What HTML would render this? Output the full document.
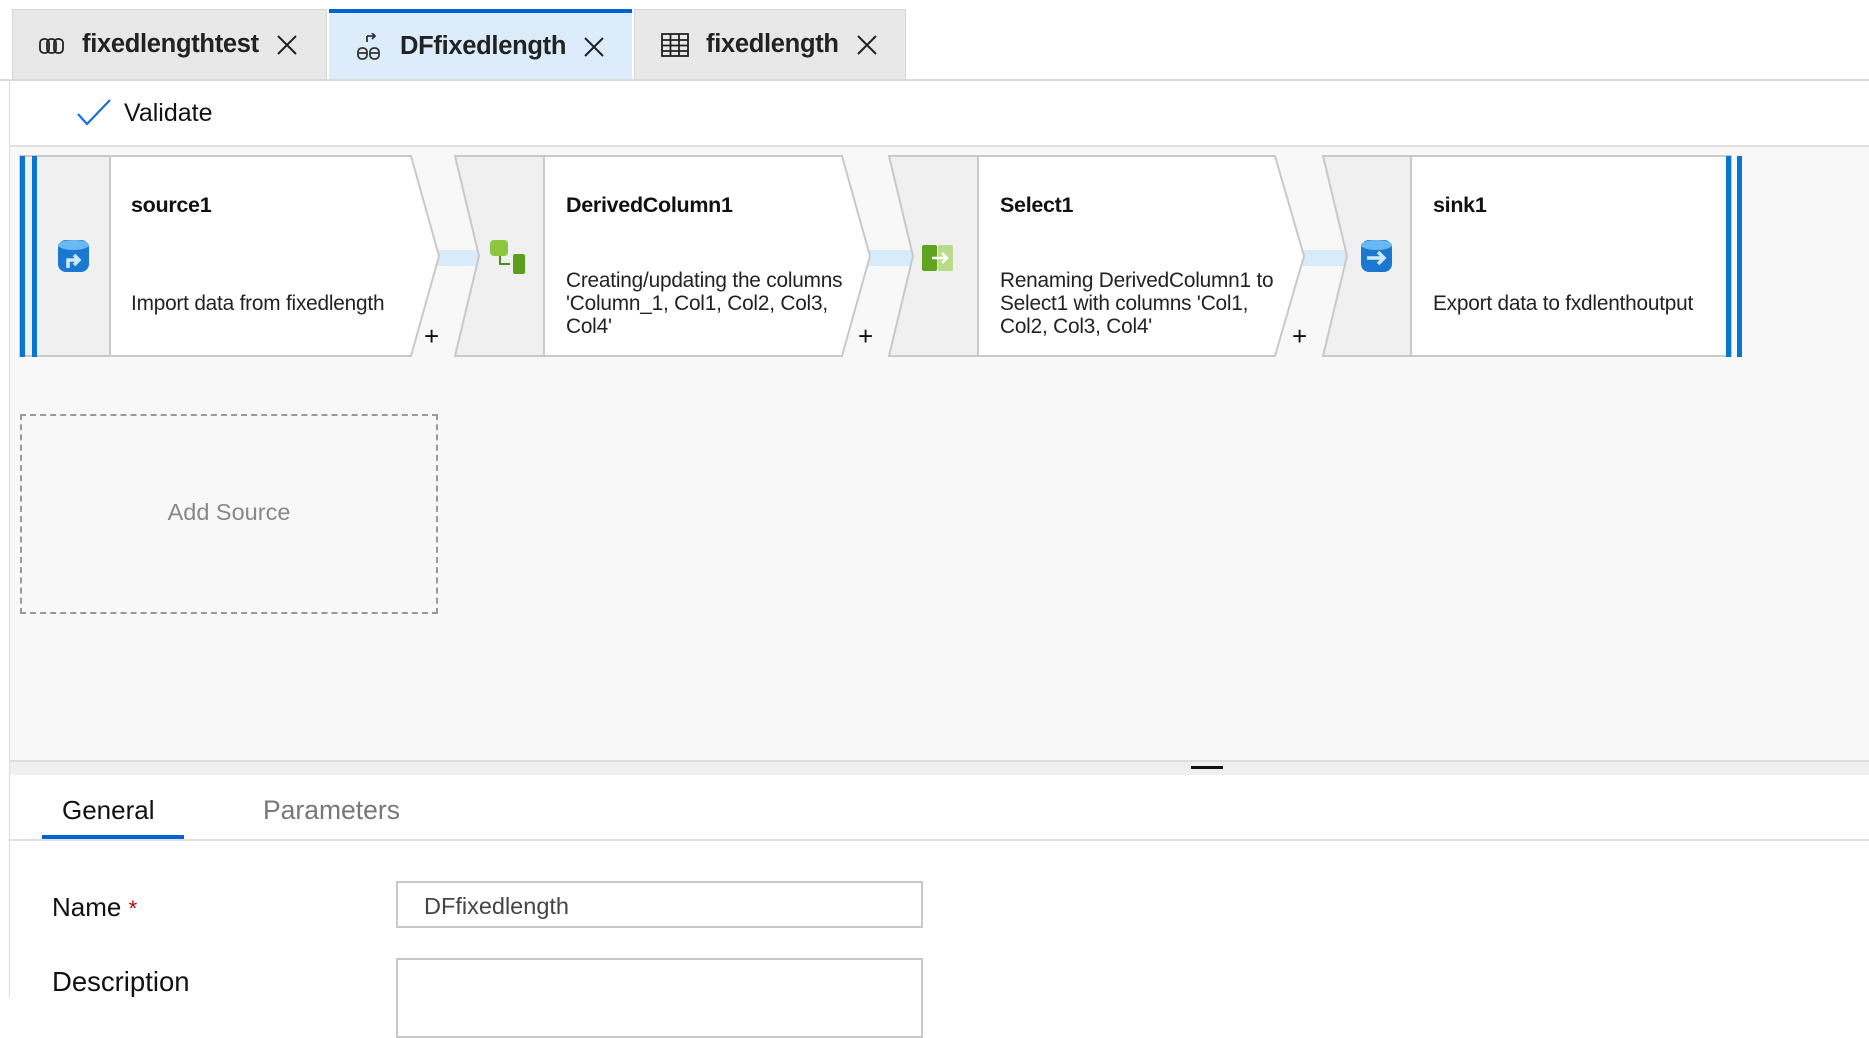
<!DOCTYPE html>
<html><head><meta charset="utf-8"><style>
*{margin:0;padding:0;box-sizing:border-box}
body{width:1869px;height:998px;overflow:hidden;background:#fff;font-family:"Liberation Sans",sans-serif;color:#111;position:relative}
.a{position:absolute;white-space:nowrap}
.tab{position:absolute;top:9px;height:70px;background:#e8e8e8;border:1px solid #d6d6d6;border-bottom:none}
.tt{position:absolute;top:30px;font-size:25.5px;font-weight:bold;color:#222;letter-spacing:-0.3px}
.ttl{font-size:21.5px;font-weight:bold;letter-spacing:-0.3px}
.desc{font-size:20.8px;line-height:23px;color:#222;letter-spacing:-0.2px}
.plus{font-size:26px;color:#111}
</style></head><body>
<div class="tab" style="left:12px;width:315px"></div>
<div class="tab" style="left:329px;width:303px;background:#dcecfb;border-color:#dcecfb"></div>
<div class="a" style="left:329px;top:9px;width:303px;height:4px;background:#0063d3"></div>
<div class="tab" style="left:634px;width:272px"></div>
<div class="a" style="left:0;top:79px;width:1869px;height:2px;background:#dadada"></div>
<svg class="a" style="left:38px;top:36px" width="28" height="20" viewBox="0 0 28 20" fill="none" stroke="#222" stroke-width="1.8"><rect x="2" y="3" width="9" height="14" rx="4"/><rect x="9" y="3" width="9" height="14" rx="4"/><rect x="16" y="3" width="9" height="14" rx="4"/></svg>
<div class="tt" style="left:82px">fixedlengthtest</div>
<svg class="a" style="left:276px;top:34px" width="22" height="22" stroke="#222" stroke-width="2"><path d="M2 2L20 20M20 2L2 20"/></svg>
<svg class="a" style="left:355px;top:33px" width="28" height="28" fill="none" stroke="#333" stroke-width="1.8"><path d="M12 3h8M17 0l3 3-3 3M12 3v6"/><rect x="3" y="15" width="9" height="11" rx="4"/><rect x="15" y="15" width="9" height="11" rx="4"/><path d="M3 20h9M15 20h9"/></svg>
<div class="tt" style="left:400px;top:32px">DFfixedlength</div>
<svg class="a" style="left:583px;top:36px" width="22" height="22" stroke="#222" stroke-width="2"><path d="M2 2L20 20M20 2L2 20"/></svg>
<svg class="a" style="left:661px;top:33px" width="28" height="24" fill="none" stroke="#222" stroke-width="1.8"><rect x="1" y="1" width="26" height="22"/><path d="M1 7h26M1 12.5h26M1 18h26M9.5 1v22M18 1v22"/></svg>
<div class="tt" style="left:706px">fixedlength</div>
<svg class="a" style="left:856px;top:34px" width="22" height="22" stroke="#222" stroke-width="2"><path d="M2 2L20 20M20 2L2 20"/></svg>
<svg class="a" style="left:76px;top:98px" width="36" height="28" fill="none" stroke="#1a6fd1" stroke-width="2.2"><path d="M2 16l9 10L34 2"/></svg>
<div class="a" style="left:124px;top:99px;font-size:25px;color:#111">Validate</div>
<div class="a" style="left:9px;top:145px;width:1860px;height:615px;background:#f8f8f8;border-top:2px solid #e0e0e0"></div>
<div class="a" style="left:9px;top:79px;width:1px;height:919px;background:#ddd"></div>
<svg class="a" style="left:0;top:0" width="1869" height="400">
<g fill="#d8ebfb"><rect x="436" y="250" width="46" height="16"/><rect x="868" y="250" width="46" height="16"/><rect x="1302" y="250" width="46" height="16"/></g>
<g stroke="#c9c9c9" stroke-width="2">
<rect x="20" y="156" width="90" height="200" fill="#f0f0f0"/>
<polygon points="110,156 411,156 439,256 411,356 110,356" fill="#fff"/>
<polygon points="455,156 544,156 544,356 455,356 479,256" fill="#f0f0f0"/>
<polygon points="544,156 842,156 870,256 842,356 544,356" fill="#fff"/>
<polygon points="889,156 978,156 978,356 889,356 913,256" fill="#f0f0f0"/>
<polygon points="978,156 1275,156 1304,256 1275,356 978,356" fill="#fff"/>
<polygon points="1323,156 1411,156 1411,356 1323,356 1347,256" fill="#f0f0f0"/>
<rect x="1411" y="156" width="320" height="200" fill="#fff"/>
</g>
<g fill="#0a74d4"><rect x="20" y="156" width="5" height="201"/><rect x="32" y="156" width="5" height="201"/><rect x="1726" y="156" width="5" height="201"/><rect x="1737" y="156" width="5" height="201"/></g>
<g><rect x="58" y="240" width="31" height="32" rx="8" fill="#1a78d0"/><ellipse cx="73.5" cy="245" rx="15.5" ry="5" fill="#6ab8f2"/><path d="M68 268v-8h10M74 255l5 5-5 5" stroke="#cde8ff" stroke-width="3.5" fill="none"/></g>
<g><rect x="490" y="240" width="18" height="16" rx="4" fill="#8dc63f"/><rect x="513" y="254" width="12" height="20" rx="2" fill="#5b9e1e"/><path d="M500 256v8h10" stroke="#4e8f1b" stroke-width="2" fill="none"/></g>
<g><rect x="922" y="245" width="15" height="26" rx="2" fill="#5fa31f"/><rect x="938" y="245" width="15" height="26" rx="2" fill="#b9dc8a"/><path d="M932 258h14M942 253l5 5-5 5" stroke="#fff" stroke-width="2.5" fill="none"/></g>
<g><rect x="1361" y="240" width="31" height="32" rx="8" fill="#1a78d0"/><ellipse cx="1376.5" cy="245" rx="15.5" ry="5" fill="#6ab8f2"/><path d="M1367 258h16M1378 252l6 6-6 6" stroke="#cde8ff" stroke-width="3.5" fill="none"/></g>
</svg>
<div class="a ttl" style="left:131px;top:193px">source1</div>
<div class="a desc" style="left:131px;top:292px">Import data from fixedlength</div>
<div class="a plus" style="left:424px;top:321px">+</div>
<div class="a ttl" style="left:566px;top:193px">DerivedColumn1</div>
<div class="a desc" style="left:566px;top:269px">Creating/updating the columns<br>'Column_1, Col1, Col2, Col3,<br>Col4'</div>
<div class="a plus" style="left:858px;top:321px">+</div>
<div class="a ttl" style="left:1000px;top:193px">Select1</div>
<div class="a desc" style="left:1000px;top:269px">Renaming DerivedColumn1 to<br>Select1 with columns 'Col1,<br>Col2, Col3, Col4'</div>
<div class="a plus" style="left:1292px;top:321px">+</div>
<div class="a ttl" style="left:1433px;top:193px">sink1</div>
<div class="a desc" style="left:1433px;top:292px">Export data to fxdlenthoutput</div>
<div class="a" style="left:20px;top:414px;width:418px;height:200px;border:2px dashed #999"></div>
<div class="a" style="left:20px;top:499px;width:418px;text-align:center;font-size:23.5px;color:#888">Add Source</div>
<div class="a" style="left:10px;top:760px;width:1859px;height:15px;background:#f0f0f0;border-top:2px solid #ddd"></div>
<div class="a" style="left:1191px;top:766px;width:32px;height:3px;background:#111"></div>
<div class="a" style="left:62px;top:795px;font-size:26px;color:#111">General</div>
<div class="a" style="left:263px;top:795px;font-size:26.5px;color:#777">Parameters</div>
<div class="a" style="left:42px;top:835px;width:142px;height:4px;background:#0063d3"></div>
<div class="a" style="left:10px;top:839px;width:1859px;height:2px;background:#e0e0e0"></div>
<div class="a" style="left:52px;top:892px;font-size:26px;color:#111">Name <span style="color:#b00;font-size:22px">*</span></div>
<div class="a" style="left:396px;top:881px;width:527px;height:47px;border:2px solid #c8c8c8;background:#fff"></div>
<div class="a" style="left:424px;top:893px;font-size:23.5px;color:#444">DFfixedlength</div>
<div class="a" style="left:52px;top:966px;font-size:27.5px;color:#111">Description</div>
<div class="a" style="left:396px;top:958px;width:527px;height:80px;border:2px solid #c8c8c8;background:#fff"></div>
</body></html>
